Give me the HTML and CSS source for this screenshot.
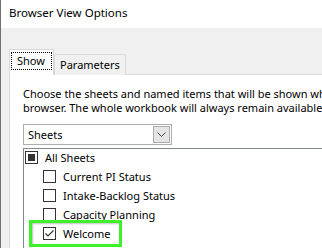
FILE: index.html
```html
<!DOCTYPE html>
<html>
<head>
<meta charset="utf-8">
<link rel="stylesheet" href="styles.css">
</head>
<body>
<div class="window">
  <div class="titlebar">Browser View Options</div>
  <div class="content">
    <div class="tabs">
      <div class="tab active"><span class="focus">Show</span></div>
      <div class="tab">Parameters</div>
    </div>
    <div class="panel">
      <div class="desc">
        <span class="line">Choose the sheets and named items that will be shown when the workbook is viewed in the</span>
        <span class="line">browser. The whole workbook will always remain available.</span>
      </div>
      <div class="select">
        <span class="select-text">Sheets</span>
        <span class="select-btn">
          <svg width="9" height="5" viewBox="0 0 9 5"><path d="M0.5 0.5 L4.5 4.5 L8.5 0.5" fill="none" stroke="#444" stroke-width="1"/></svg>
        </span>
      </div>
      <div class="list">
        <div class="row">
          <span class="cb"><span class="ind"></span></span><span class="label">All Sheets</span>
        </div>
        <div class="row child">
          <span class="cb"></span><span class="label">Current PI Status</span>
        </div>
        <div class="row child">
          <span class="cb"></span><span class="label">Intake-Backlog Status</span>
        </div>
        <div class="row child">
          <span class="cb"></span><span class="label">Capacity Planning</span>
        </div>
        <div class="row child">
          <span class="cb"><svg width="11" height="11" viewBox="0 0 11 11"><path d="M1.5 5.5 L4 8 L9.5 2.5" fill="none" stroke="#333" stroke-width="1.2"/></svg></span><span class="label">Welcome</span>
        </div>
        <div class="highlight"></div>
      </div>
    </div>
  </div>
</div>
</body>
</html>
```
FILE: styles.css
```css
html, body {
  margin: 0;
  padding: 0;
  overflow: hidden;
  width: 322px;
  height: 248px;
}
body {
  font-family: "Noto Sans", "DejaVu Sans", sans-serif;
  font-size: 11px;
  color: #000;
  background: #f0f0f0;
}
.window {
  width: 420px;
  height: 248px;
  border-left: 1px solid #707070;
  background: #f0f0f0;
  overflow: hidden;
}
.titlebar {
  height: 28px;
  background: #fff;
  padding-left: 8px;
  line-height: 26px;
  font-size: 11.5px;
  color: #000;
}
.content {
  padding: 21px 0 0 8px;
}
.tabs {
  display: flex;
  align-items: flex-end;
  height: 25px;
  position: relative;
  z-index: 1;
}
.tab {
  box-sizing: border-box;
  border: 1px solid #d9d9d9;
  border-bottom: none;
  background: #f0f0f0;
  height: 21px;
  padding: 0 5px 0 5px;
  line-height: 19px;
  margin-bottom: -1px;
}
.tab.active {
  background: #fff;
  width: 45px;
  padding: 2px 1px 0 1px;
  line-height: 16px;
  margin-bottom: -1px;
  position: relative;
  z-index: 2;
  height: 26px;
}
.focus {
  display: block;
  border: 1px dotted #000;
  padding: 0 5px;
  height: 16px;
}
.panel {
  background: #fff;
  border: 1px solid #d9d9d9;
  height: 200px;
  padding: 12px 0 0 13px;
}
.desc {
  display: flex;
  flex-direction: column;
  line-height: 14px;
  white-space: nowrap;
}
.select {
  margin-top: 9px;
  box-sizing: border-box;
  width: 149px;
  height: 21px;
  border: 1px solid #adadad;
  background: #fff;
  display: flex;
  align-items: center;
  justify-content: space-between;
  padding: 1px;
}
.select-text {
  padding-left: 3px;
  line-height: 17px;
}
.select-btn {
  box-sizing: border-box;
  width: 17px;
  height: 17px;
  background: #e5e5e5;
  border: 1px solid #acacac;
  display: flex;
  align-items: center;
  justify-content: center;
}
.list {
  position: relative;
  margin-top: 3px;
  border-top: 1px solid #828790;
  border-left: 1px solid #828790;
  height: 120px;
  padding: 2px 0 0 1px;
}
.row {
  height: 19px;
  display: flex;
  align-items: flex-start;
}
.row.child {
  padding-left: 18px;
}
.cb {
  box-sizing: border-box;
  width: 13px;
  height: 13px;
  border: 1px solid #333;
  background: #fff;
  display: flex;
  align-items: center;
  justify-content: center;
  margin-top: 0;
}
.ind {
  width: 7px;
  height: 7px;
  background: #333;
}
.label {
  margin-left: 7px;
  line-height: 14px;
}
.highlight {
  position: absolute;
  left: 5px;
  top: 71px;
  width: 87px;
  height: 21px;
  border: 3px solid #3df22a;
  box-shadow: inset 1px 1px 2px rgba(0,0,0,0.25);
}
```
